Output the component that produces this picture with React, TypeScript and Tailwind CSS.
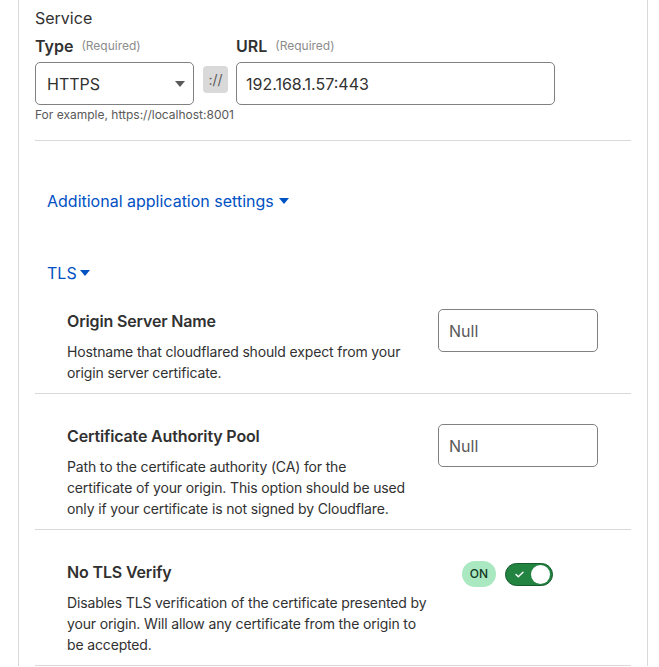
import React from 'react'

function Caret({ className = '' }: { className?: string }) {
  return (
    <svg className={className} width="10" height="6" viewBox="0 0 10 6" fill="currentColor">
      <path d="M0 0h10L5 6z" />
    </svg>
  )
}

function SettingRow({
  title,
  description,
  top,
  children,
  wide,
}: {
  title: string
  description: string
  top: string
  children: React.ReactNode
  wide?: boolean
}) {
  return (
    <div className={`flex items-start border-b border-[#d9d9d9] pb-[10px] ${top}`}>
      <div className="flex-1 pl-8">
        <div className="text-[16px] font-semibold leading-6 tracking-[-0.15px] text-[#313131]">{title}</div>
        <p className="mt-2 text-[14px] leading-[21px] tracking-[-0.15px] text-[#313131]">{description}</p>
      </div>
      <div className={wide ? 'ml-8 mr-[78px]' : 'ml-8 mr-[33px]'}>{children}</div>
    </div>
  )
}

function NullInput() {
  return (
    <div className="flex h-[43px] w-[160px] items-center rounded-[5px] border border-[#808080] px-[10px] text-[16px] text-[#595959]">
      Null
    </div>
  )
}

export default function App() {
  return (
    <main className="min-h-screen bg-white font-['Inter','Liberation_Sans',sans-serif] text-[#313131]">
      <div className="ml-[18px] w-[630px] border-x border-[#d9d9d9] px-4 pt-[6px]">
        {/* Service */}
        <div className="mb-1 h-6 text-[16px] leading-6">Service</div>
        <div className="flex items-end">
          <div className="w-[159px]">
            <div className="mb-1 flex h-6 items-center gap-[8px]">
              <span className="text-[16px] font-semibold leading-6">Type</span>
              <span className="text-[12px] leading-6 text-[#8c8c8c]">(Required)</span>
            </div>
            <div className="flex h-[43px] items-center justify-between rounded-[5px] border border-[#808080] pl-[11px] pr-[8px] text-[16px]">
              HTTPS
              <Caret className="text-[#595959]" />
            </div>
          </div>
          <div className="mb-[12px] ml-[9px] flex h-[27px] w-[25px] items-center justify-center rounded-[4px] bg-[#d9d9d9] text-[14px] text-[#595959]">
            ://
          </div>
          <div className="ml-2 w-[319px]">
            <div className="mb-1 flex h-6 items-center gap-[8px]">
              <span className="text-[16px] font-semibold leading-6">URL</span>
              <span className="text-[12px] leading-6 text-[#8c8c8c]">(Required)</span>
            </div>
            <div className="flex h-[43px] items-center rounded-[5px] border border-[#808080] px-[9px] text-[16px]">
              192.168.1.57:443
            </div>
          </div>
        </div>
        <div className="mt-[2px] text-[12px] leading-4 text-[#595959]">For example, https://localhost:8001</div>
        <div className="mt-[17px] border-t border-[#d9d9d9]" />

        {/* Expanders */}
        <div className="mt-[48px] flex h-6 items-center gap-[5px] pl-3 text-[16px] leading-6 text-[#0051c3]">
          Additional application settings
          <Caret />
        </div>
        <div className="mt-[48px] flex h-6 items-center gap-[3px] pl-3 text-[16px] leading-6 text-[#0051c3]">
          TLS
          <Caret />
        </div>

        {/* TLS settings */}
        <SettingRow
          title="Origin Server Name"
          description="Hostname that cloudflared should expect from your origin server certificate."
          top="pt-6"
        >
          <NullInput />
        </SettingRow>
        <SettingRow
          title="Certificate Authority Pool"
          description="Path to the certificate authority (CA) for the certificate of your origin. This option should be used only if your certificate is not signed by Cloudflare."
          top="pt-[30px]"
        >
          <NullInput />
        </SettingRow>
        <SettingRow
          title="No TLS Verify"
          description="Disables TLS verification of the certificate presented by your origin. Will allow any certificate from the origin to be accepted."
          top="pt-[30px]"
          wide
        >
          <div className="mt-[1px] flex items-center gap-[9px]">
            <span className="flex h-[26px] w-[34px] items-center justify-center rounded-full bg-[#a9e8c0] text-[12px] font-medium text-[#13381f]">
              ON
            </span>
            <span className="flex h-[23px] w-[48px] items-center justify-between rounded-full border border-[#155a2c] bg-[#238442] pl-[9px] pr-[2px]">
              <svg width="9" height="7" viewBox="0 0 9 7" fill="none" stroke="white" strokeWidth="1.4" strokeLinecap="round" strokeLinejoin="round">
                <path d="M1 3.6 3.3 5.8 8 1.2" />
              </svg>
              <span className="h-[19px] w-[19px] rounded-full bg-white" />
            </span>
          </div>
        </SettingRow>
      </div>
    </main>
  )
}
